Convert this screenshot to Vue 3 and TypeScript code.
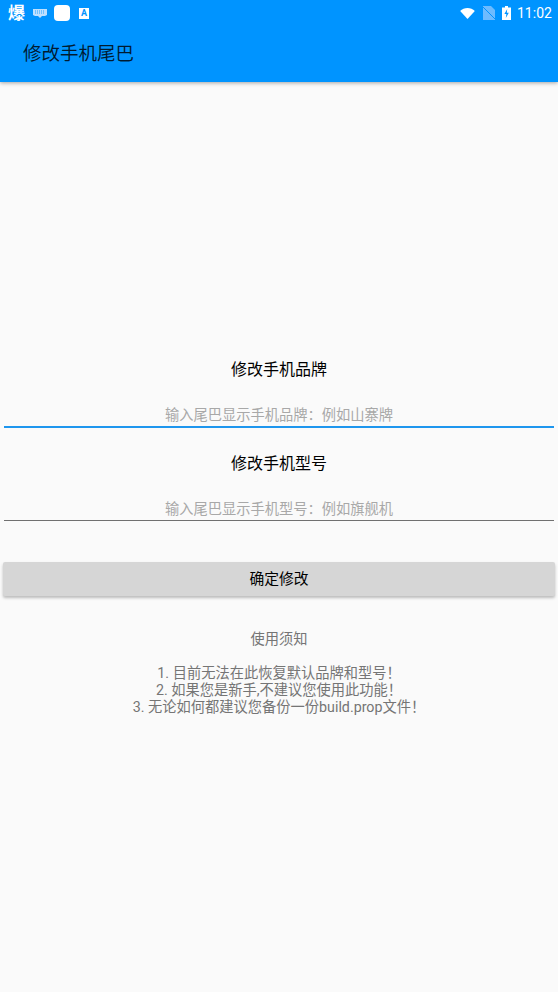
<script setup lang="ts">
const notes: string[] = [
  '1. 目前无法在此恢复默认品牌和型号！',
  '2. 如果您是新手,不建议您使用此功能！',
  '3. 无论如何都建议您备份一份build.prop文件！',
]
</script>

<template>
  <div class="page">
    <header class="appbar">
      <div class="status">
        <div class="status-left">
          <span class="glyph">爆</span>
          <svg class="kbd" width="14" height="9" viewBox="0 0 14 9">
            <path d="M0 0h14v6l-2 1H9L7 9 5 7H2L0 6z" fill="#bfe0ff" />
            <path d="M2 2h10M2 4h10" stroke="#0094ff" stroke-width="0.8" stroke-dasharray="1 1" />
          </svg>
          <span class="square"></span>
          <span class="a-icon">A</span>
        </div>
        <div class="status-right">
          <svg class="wifi" width="15" height="11" viewBox="0 0 16 12">
            <path d="M0 3.200C2 1.200 5 0 8 0s6 1.200 8 3.200L8 12z" fill="#fff" />
          </svg>
          <svg class="sim" width="12" height="14" viewBox="0 0 12 14">
            <path d="M0 0h8l4 4v10H0z" fill="#6dbbff" />
            <path d="M0 1l12 12" stroke="#0094ff" stroke-width="1" />
          </svg>
          <svg class="battery" width="9" height="14" viewBox="0 0 9 14">
            <path d="M3 0h3v1.500h3V14H0V1.500h3z" fill="#fff" />
            <path d="M5.200 3L2.400 8h2L3.800 12 6.800 6.800h-2z" fill="#0094ff" />
          </svg>
          <span class="time">11:02</span>
        </div>
      </div>
      <div class="toolbar">修改手机尾巴</div>
    </header>

    <main class="content">
      <section class="form">
        <label class="label">修改手机品牌</label>
        <input class="field focused" placeholder="输入尾巴显示手机品牌：例如山寨牌" />
        <label class="label second">修改手机型号</label>
        <input class="field" placeholder="输入尾巴显示手机型号：例如旗舰机" />
        <button class="confirm" type="button">确定修改</button>
      </section>
      <section class="notes">
        <p class="notes-title">使用须知</p>
        <p v-for="n in notes" :key="n" class="note">{{ n }}</p>
      </section>
    </main>
  </div>
</template>

<style>
html, body { margin: 0; background: #fafafa; }
</style>

<style scoped>
.page {
  width: 558px;
  height: 992px;
  overflow: hidden;
  background: #fafafa;
  display: flex;
  flex-direction: column;
  font-family: "Roboto", "Noto Sans CJK SC", sans-serif;
}
.appbar {
  height: 82px;
  flex: none;
  background: #0094ff;
  box-shadow: 0 1px 4px rgba(0, 0, 0, 0.35);
  position: relative;
  z-index: 1;
}
.status {
  height: 28px;
  display: flex;
  align-items: center;
  justify-content: space-between;
  padding: 0 8px 2px;
  box-sizing: border-box;
  color: #fff;
}
.status-left, .status-right { display: flex; align-items: center; }
.glyph { font-size: 17px; line-height: 20px; font-weight: 700; width: 17px; }
.kbd { margin-left: 8px; }
.square {
  width: 16px;
  height: 16px;
  border-radius: 4px;
  background: #fff;
  margin-left: 7px;
}
.a-icon {
  width: 10px;
  height: 11px;
  margin-left: 9px;
  background: #fff;
  color: #0094ff;
  font-size: 9px;
  line-height: 11px;
  font-weight: 700;
  text-align: center;
}
.sim { margin-left: 8px; }
.battery { margin-left: 7px; }
.time { font-size: 14px; width: 33px; margin-left: 6px; white-space: nowrap; }
.toolbar {
  height: 54px;
  padding: 0 0 6px 23px;
  box-sizing: border-box;
  display: flex;
  align-items: center;
  font-size: 18.5px;
  color: rgba(0, 0, 0, 0.82);
}
.content { flex: 1; }
.form {
  display: flex;
  flex-direction: column;
  align-items: center;
  padding-top: 277px;
}
.label {
  font-size: 16px;
  line-height: 22px;
  color: #000;
}
.label.second { margin-top: 25px; }
.field {
  width: 550px;
  height: 27px;
  margin-top: 19px;
  padding: 4px 0 0;
  box-sizing: border-box;
  border: 0;
  border-bottom: 1px solid #707070;
  background: transparent;
  outline: none;
  text-align: center;
  font: inherit;
  font-size: 14.25px;
}
.field::placeholder { color: #a8a8a8; opacity: 1; }
.field.focused { height: 28px; border-bottom: 2px solid #1e96ee; }
.confirm {
  width: 552px;
  height: 34px;
  margin-top: 41px;
  border: 0;
  border-radius: 2px;
  background: #d6d6d6;
  box-shadow: 0 2px 3px rgba(0, 0, 0, 0.25);
  color: #000;
  font: inherit;
  font-size: 14.75px;
  padding: 0 0 3px;
}
.notes {
  margin-top: 34px;
  text-align: center;
  color: #757575;
  font-size: 14.25px;
}
.notes p { margin: 0; }
.notes-title { line-height: 19px; margin-bottom: 16px !important; }
.note { line-height: 16.750px; }
</style>
